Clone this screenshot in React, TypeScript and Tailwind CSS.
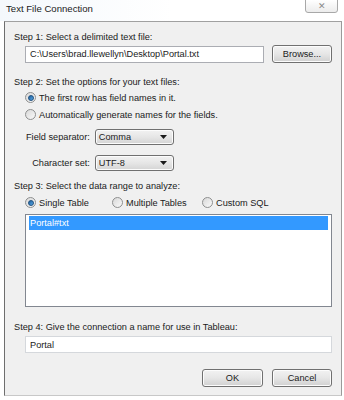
import React from 'react'

const Radio = ({ checked = false }: { checked?: boolean }) => (
  <span className="w-[11px] h-[11px] rounded-full border border-[#8e8f8f] bg-gradient-to-br from-[#d8d8d8] to-[#fafafa] flex items-center justify-center shrink-0">
    {checked && (
      <span className="w-[6px] h-[6px] rounded-full bg-gradient-to-br from-[#1c5e9c] to-[#5aa9e6] border border-[#1d4f7e]" />
    )}
  </span>
)

const Button = ({ label, className = '' }: { label: string; className?: string }) => (
  <div
    className={`h-[18px] flex items-center justify-center rounded-[3px] border border-[#707070] bg-gradient-to-b from-[#f2f2f2] via-[#e6e6e6] to-[#d0d0d0] shadow-[inset_0_0_0_1px_#fcfcfc] text-[#1a1a1a] ${className}`}
  >
    {label}
  </div>
)

const Dropdown = ({ value }: { value: string }) => (
  <div className="w-[79px] h-[16px] flex items-center justify-between pl-[3px] pr-[6px] rounded-[3px] border border-[#707070] bg-gradient-to-b from-[#f2f2f2] via-[#e6e6e6] to-[#d4d4d4] shadow-[inset_0_0_0_1px_#fcfcfc]">
    <span>{value}</span>
    <svg width="7" height="4" viewBox="0 0 7 4">
      <path d="M0 0h7L3.5 4z" fill="#1a1a1a" />
    </svg>
  </div>
)

export default function App() {
  return (
    <div
      className="w-[344px] h-[400px] bg-white overflow-hidden text-[9.2px] leading-[12px] text-[#1a1a1a] flex flex-col"
      style={{ fontFamily: '"Liberation Sans", Arial, sans-serif' }}
    >
      {/* title bar */}
      <div className="h-[21px] flex items-start justify-between pl-[6px] pr-[6px] bg-gradient-to-r from-[#f4f8fc] via-white to-white">
        <span className="text-[9.6px] mt-[3px]">Text File Connection</span>
        <div className="w-[33px] h-[14px] -mt-[1px] rounded-b-[3px] border border-[#a8a8a8] bg-gradient-to-b from-white to-[#ececec] flex items-center justify-center text-[9px] text-[#8a8a8a]">
          ✕
        </div>
      </div>

      {/* content panel */}
      <div className="ml-[4px] mr-[2px] h-[375px] bg-[#f0f0f0] border border-t-[#a0a0a0] border-l-[#6e6e6e] border-r-[#9a9a9a] border-b-[#c8c8c8] pl-[9px] pr-[9px] flex flex-col">
        <div className="mt-[9px] h-[12px]">Step 1: Select a delimited text file:</div>
        <div className="mt-[2px] ml-[11px] flex items-center gap-[8px]">
          <div className="w-[239px] h-[17px] bg-white border border-[#abadb3] flex items-center pl-[4px]">
            C:\Users\brad.llewellyn\Desktop\Portal.txt
          </div>
          <Button label="Browse..." className="w-[60px]" />
        </div>

        <div className="mt-[13px] h-[12px]">Step 2: Set the options for your text files:</div>
        <div className="mt-[3px] ml-[11px] flex items-center gap-[3px] h-[13px]">
          <Radio checked />
          <span>The first row has field names in it.</span>
        </div>
        <div className="mt-[4px] ml-[11px] flex items-center gap-[3px] h-[13px]">
          <Radio />
          <span>Automatically generate names for the fields.</span>
        </div>

        <div className="mt-[8px] ml-[12px] grid grid-cols-[auto_auto] gap-x-[5px] gap-y-[10px] items-center justify-start">
          <span className="text-right whitespace-nowrap">Field separator:</span>
          <Dropdown value="Comma" />
          <span className="text-right whitespace-nowrap">Character set:</span>
          <Dropdown value="UTF-8" />
        </div>

        <div className="mt-[9px] h-[12px]">Step 3: Select the data range to analyze:</div>
        <div className="mt-[4px] ml-[11px] flex items-center h-[13px]">
          <div className="w-[87px] flex items-center gap-[3px]">
            <Radio checked />
            <span>Single Table</span>
          </div>
          <div className="w-[90px] flex items-center gap-[3px]">
            <Radio />
            <span>Multiple Tables</span>
          </div>
          <div className="flex items-center gap-[3px]">
            <Radio />
            <span>Custom SQL</span>
          </div>
        </div>
        <div className="mt-[5px] ml-[11px] w-[307px] h-[93px] bg-white border border-[#828790] px-[3px] pt-[1px]">
          <div className="h-[14px] bg-[#3399ff] text-white flex items-center pl-[1px]">Portal#txt</div>
        </div>

        <div className="mt-[14px] h-[12px]">Step 4: Give the connection a name for use in Tableau:</div>
        <div className="mt-[3px] ml-[11px] w-[307px] h-[17px] bg-white border border-[#d5d8dc] flex items-center pl-[4px]">
          Portal
        </div>

        <div className="mt-[16px] flex justify-end gap-[9px]">
          <Button label="OK" className="w-[61px]" />
          <Button label="Cancel" className="w-[60px]" />
        </div>
      </div>
    </div>
  )
}
